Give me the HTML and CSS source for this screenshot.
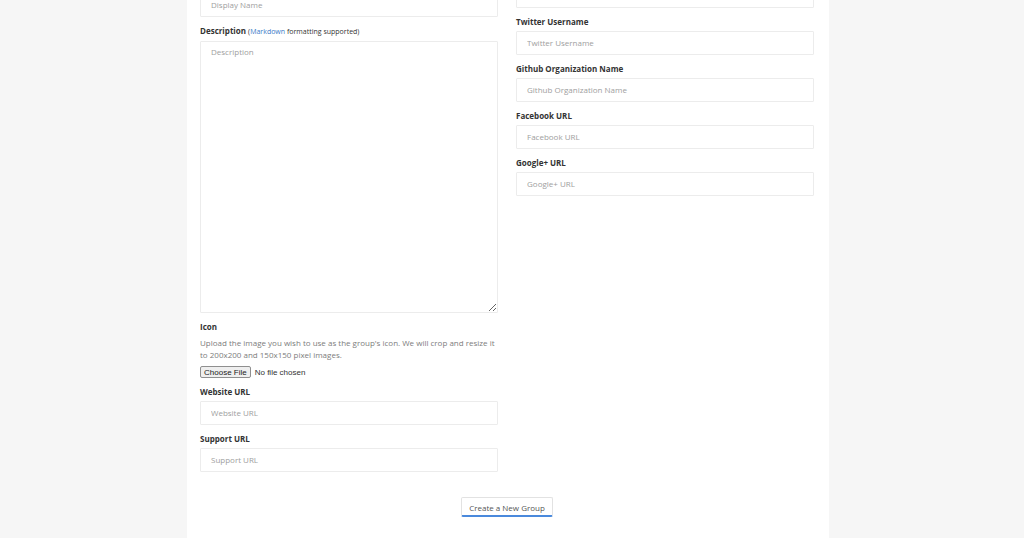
FILE: index.html
```html
<!DOCTYPE html>
<html lang="en">
<head>
  <meta charset="UTF-8" />
  <meta name="viewport" content="width=device-width, initial-scale=1.0"/>
  <title>Create a New Group</title>
  <link rel="stylesheet" href="styles.css">
</head>
<body>

  <form class="panel" id="groupForm">
    <div class="columns">
      <div class="col col-left">
        <label for="displayName">Display Name</label>
        <input type="text" id="displayName" name="displayName" placeholder="Display Name" />

        <label for="description">Description <span class="hint">(<a href="#">Markdown</a> formatting supported)</span></label>
        <textarea id="description" name="description" placeholder="Description"></textarea>

        <label for="icon">Icon</label>
        <p class="help">Upload the image you wish to use as the group's icon. We will crop and resize it to 200x200 and 150x150 pixel images.</p>
        <input type="file" id="icon" name="icon" />

        <label for="website">Website URL</label>
        <input type="text" id="website" name="website" placeholder="Website URL" />

        <label for="support">Support URL</label>
        <input type="text" id="support" name="support" placeholder="Support URL" />
      </div>

      <div class="col">
        <label for="email">Email Address</label>
        <input type="text" id="email" name="email" />

        <label for="twitter">Twitter Username</label>
        <input type="text" id="twitter" name="twitter" placeholder="Twitter Username" />

        <label for="github">Github Organization Name</label>
        <input type="text" id="github" name="github" placeholder="Github Organization Name" />

        <label for="facebook">Facebook URL</label>
        <input type="text" id="facebook" name="facebook" placeholder="Facebook URL" />

        <label for="googleplus">Google+ URL</label>
        <input type="text" id="googleplus" name="googleplus" placeholder="Google+ URL" />
      </div>
    </div>

    <div class="actions">
      <button type="submit">Create a New Group</button>
    </div>
  </form>

</body>
</html>
```

FILE: styles.css
```css
body {
  font-family: "Open Sans", "Liberation Sans", sans-serif;
  background-color: #f6f6f6;
  margin: 0;
  color: #333;
  font-size: 8px;
  line-height: 12px;
}

.panel {
  box-sizing: border-box;
  width: 642px;
  margin: -31px 0 0 187px;
  padding: 0 15px 20px 13px;
  background-color: #fff;
  min-height: 569px;
}

.columns {
  display: grid;
  grid-template-columns: 1fr 1fr;
  gap: 18px;
}

.col-left {
  padding-top: 9px;
}

label {
  display: block;
  font-weight: bold;
  margin-bottom: 3px;
}

.hint {
  font-weight: normal;
  font-size: 7px;
}

.hint a {
  color: #3a7bc8;
  text-decoration: none;
}

input[type="text"], textarea {
  display: block;
  box-sizing: border-box;
  width: 100%;
  height: 24px;
  padding: 0 10px 1px;
  margin: 0 0 8px;
  border: 1px solid #ececec;
  border-radius: 1px;
  font-family: inherit;
  font-size: 8px;
  color: #333;
}

textarea {
  height: 272px;
  padding-top: 4px;
  line-height: 12px;
  resize: vertical;
}

::placeholder {
  color: #9e9e9e;
}

.help {
  margin: 4px 0 5px;
  color: #7d7d7d;
}

input[type="file"] {
  display: block;
  font-family: "Liberation Sans", Arial, sans-serif;
  font-size: 8px;
  color: #333;
  margin-bottom: 8px;
}

input[type="file"]::file-selector-button {
  font-family: inherit;
  font-size: 8px;
  padding: 0 3px;
  height: 12px;
  margin-right: 4px;
  border: 1px solid #8f8f8f;
  border-radius: 2px;
  background-color: #efefef;
  color: #222;
}

.actions {
  text-align: center;
  margin-top: 17px;
}

button {
  font-family: inherit;
  font-size: 8px;
  color: #555;
  background-color: #fff;
  padding: 3px 7px 2px;
  height: 20px;
  border: 1px solid #e2e2e2;
  border-bottom: 2px solid #4a89dc;
  border-radius: 2px;
  cursor: pointer;
}
```
